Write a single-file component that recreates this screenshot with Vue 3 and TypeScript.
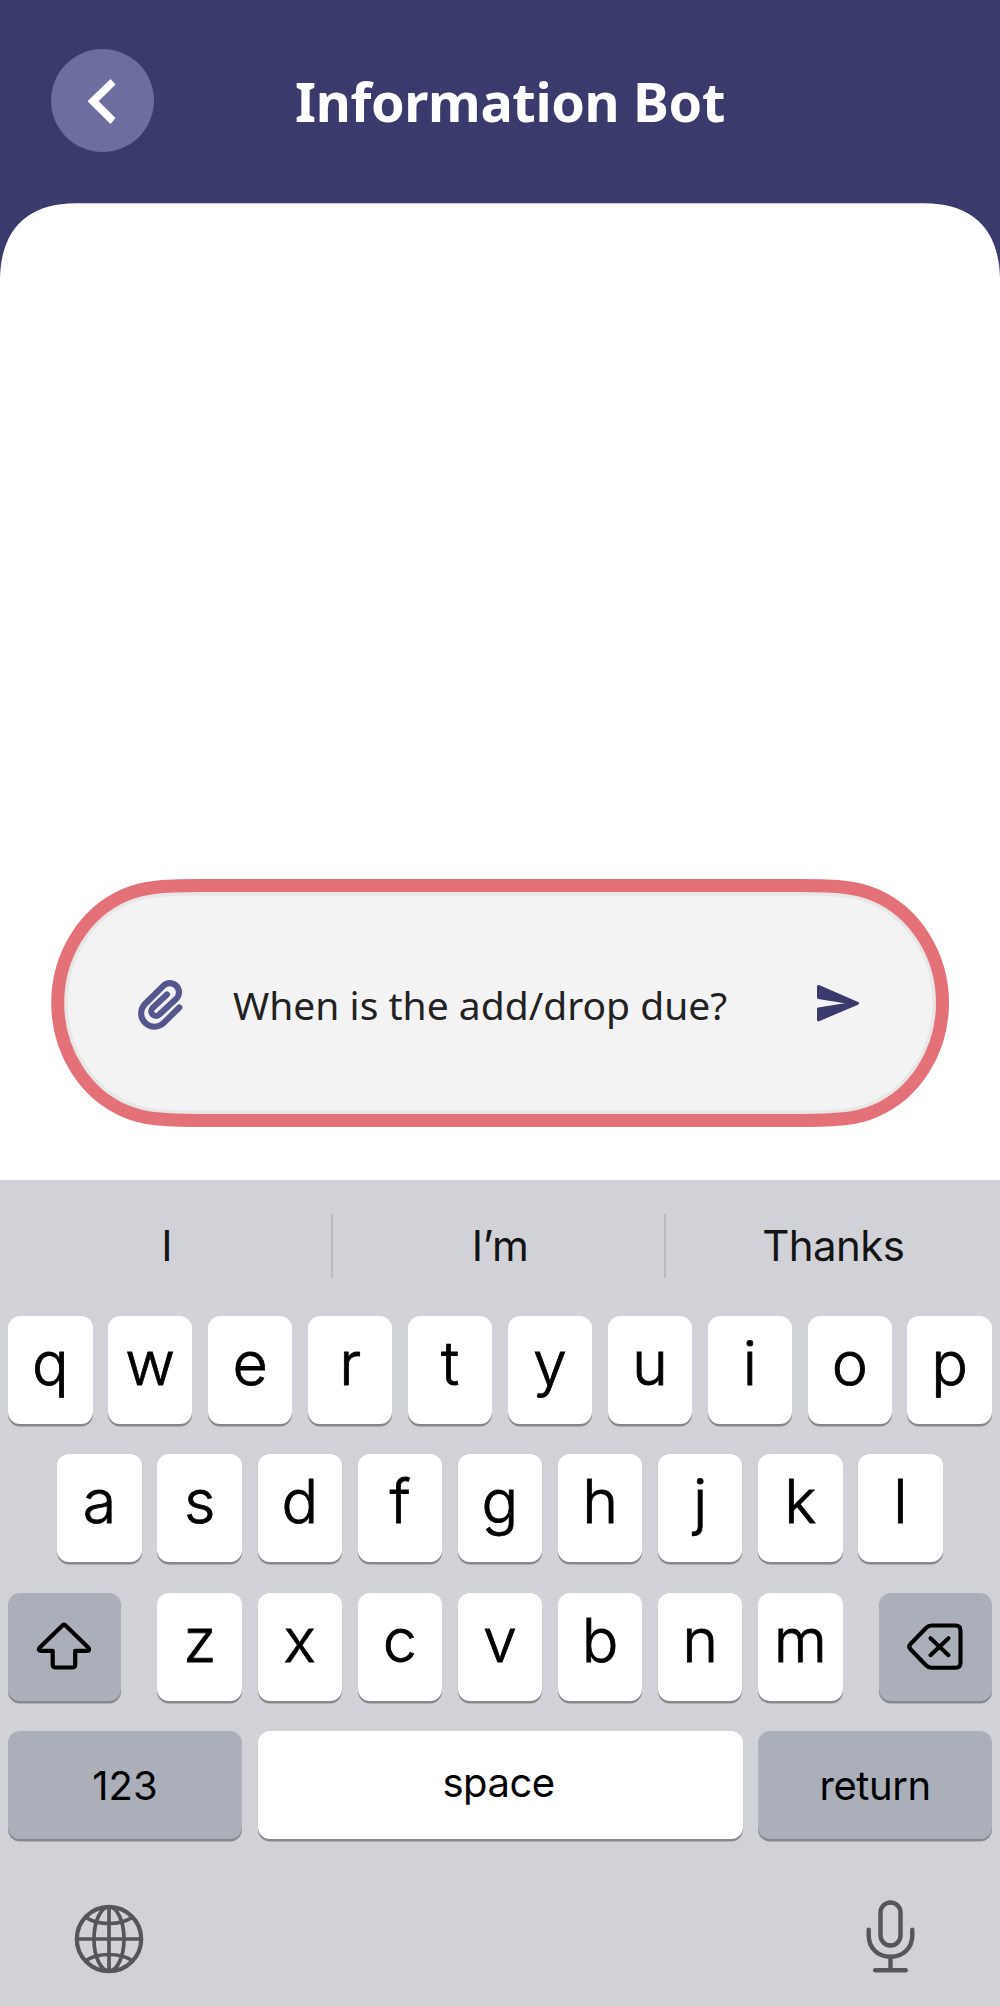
<script setup lang="ts">
interface Key {
  label: string
  kind?: 'shift' | 'delete' | 'numbers' | 'space' | 'return'
}

const title = 'Information Bot'
const message = 'When is the add/drop due?'
const suggestions: string[] = ['I', 'I’m', 'Thanks']

const pill =
  'M200 885.5 H800 C840 885.5 858 887.5 875 895 C915 912 942.5 955 942.5 1003 C942.5 1051 915 1094 875 1111 C858 1118.5 840 1120.5 800 1120.5 H200 C160 1120.5 142 1118.5 125 1111 C85 1094 57.7 1051 57.7 1003 C57.7 955 85 912 125 895 C142 887.5 160 885.5 200 885.5 Z'

const letters = (s: string): Key[] => s.split('').map((label) => ({ label }))

const rows: Key[][] = [
  letters('qwertyuiop'),
  letters('asdfghjkl'),
  [{ label: '', kind: 'shift' }, ...letters('zxcvbnm'), { label: '', kind: 'delete' }],
  [
    { label: '123', kind: 'numbers' },
    { label: 'space', kind: 'space' },
    { label: 'return', kind: 'return' },
  ],
]
</script>

<template>
  <div class="screen">
    <header class="header">
      <button class="back" aria-label="Back">
        <svg width="103" height="103" viewBox="0 0 103 103">
          <path d="M59.5 30 L64.5 35.5 L47.7 52.3 L64.5 69 L59.5 75 L36.5 52.3 Z" fill="#fff" />
        </svg>
      </button>
      <h1 class="title">{{ title }}</h1>
    </header>

    <svg class="curve" width="1000" height="75" viewBox="0 0 1000 75">
      <path d="M0 75 C1 29 25 0.3 76 0.3 H924 C975 0.3 999 29 1000 75 Z" fill="#fff" />
    </svg>

    <main class="conversation">
      <div class="composer">
        <svg class="outline" width="898" height="248" viewBox="51 879 898 248">
          <clipPath id="pill-inside"><path :d="pill" /></clipPath>
          <path :d="pill" fill="#f3f3f3" stroke="#e8e6e6" stroke-width="20" clip-path="url(#pill-inside)" />
          <path :d="pill" fill="none" stroke="#e47177" stroke-width="13" />
        </svg>
        <svg class="clip" width="50" height="56" viewBox="136 977 50 56">
          <path
            d="M179.3 1007.5 L164 1022.7 A13.3 13.3 0 0 1 145 1004 L163.3 985.8 A9.1 9.1 0 0 1 176.3 998.7 L159.3 1014.5 A4.7 4.7 0 0 1 152.5 1008 L167 994.5"
            fill="none" stroke="#56568f" stroke-width="6.1" stroke-linecap="round" stroke-linejoin="round" />
        </svg>
        <span class="message">{{ message }}</span>
        <svg class="send" width="46" height="40" viewBox="815 983 46 40">
          <path d="M818.5 986.5 L857.5 1003.3 L818.5 1019.8 V1009 L854 1003.3 L818.5 997.6 Z" fill="#3b3a6d"
            stroke="#3b3a6d" stroke-width="3" stroke-linejoin="round" />
        </svg>
      </div>
    </main>

    <section class="keyboard">
      <div class="suggestions">
        <span v-for="word in suggestions" :key="word" class="suggestion">{{ word }}</span>
      </div>
      <div class="rows">
        <div v-for="(row, r) in rows" :key="r" class="row">
          <button v-for="(key, k) in row" :key="k" class="key" :class="key.kind">
            <svg v-if="key.kind === 'shift'" width="60" height="52" viewBox="34.8 1621.5 60 52">
              <path
                d="M62.3 1625.9 Q63.8 1624.3 65.3 1625.9 L88.3 1648.3 Q90 1651.3 87 1651.3 H75 V1665 Q75 1668 72 1668 H55.5 Q52.5 1668 52.5 1665 V1651.3 H40.5 Q37.5 1651.3 39.3 1648.3 Z"
                fill="none" stroke="#000" stroke-width="4.2" stroke-linejoin="round" />
            </svg>
            <svg v-else-if="key.kind === 'delete'" width="60" height="52" viewBox="905.5 1621.3 60 52">
              <path
                d="M932 1625.8 H956 Q961 1625.8 961 1630.8 V1663 Q961 1668 956 1668 H932 Q929 1668 926.5 1665.5 L911 1649.5 Q908.5 1647 911 1644.3 L926.5 1628.3 Q929 1625.8 932 1625.8 Z M931 1638.5 L949 1655.5 M949 1638.5 L931 1655.5"
                fill="none" stroke="#000" stroke-width="4.1" stroke-linecap="round" stroke-linejoin="round" />
            </svg>
            <span v-else class="label">{{ key.label }}</span>
          </button>
        </div>
      </div>
      <div class="dock">
        <svg class="globe" width="70" height="70" viewBox="-35 -35 70 70" fill="none" stroke="#53565b" stroke-width="3.7">
          <circle r="32.2" stroke-width="4.2" />
          <path d="M0 -32 V32 M-32 0 H32" />
          <ellipse rx="15" ry="32" />
          <path d="M-23 -21.5 Q-14 -15.5 0 -15.5 T23 -21.5" />
          <path d="M-23 21.5 Q-14 15.5 0 15.5 T23 21.5" />
        </svg>
        <svg width="50" height="74" viewBox="866 1899.8 50 74" fill="none" stroke="#53565b" stroke-width="4.4"
          stroke-linecap="round">
          <rect x="880.5" y="1902.3" width="20" height="43" rx="10" />
          <path d="M868.7 1929.5 V1935 C868.7 1948 878 1956.5 890.5 1956.5 C903 1956.5 912.3 1948 912.3 1935 V1929.5" />
          <path d="M890.5 1957 V1969 M875.2 1970 H905.8" />
        </svg>
      </div>
    </section>
  </div>
</template>

<style>
body {
  margin: 0;
}
</style>

<style scoped>
.screen {
  width: 1000px;
  height: 2006px;
  display: flex;
  flex-direction: column;
  overflow: hidden;
  background: #fff;
}

.header {
  height: 203px;
  display: flex;
  box-sizing: border-box;
  padding-left: 51px;
  background: #3b3a6d;
}

.back {
  width: 103px;
  height: 103px;
  margin: 49px 0 0;
  padding: 0;
  border: 0;
  border-radius: 50%;
  background: #6e6da0;
}

.back svg,
.curve {
  display: block;
}

.title {
  margin: 0 0 0 141px;
  font: 700 54px/202px 'Noto Sans', sans-serif;
  letter-spacing: -0.36px;
  color: #fff;
  white-space: nowrap;
}

.curve {
  flex: none;
  background: #3b3a6d;
}

.conversation {
  flex: 1;
  display: flex;
  flex-direction: column;
  justify-content: flex-end;
  align-items: center;
  padding-bottom: 53px;
}

.composer {
  position: relative;
  width: 898px;
  height: 248px;
  display: flex;
  align-items: center;
}

.outline {
  position: absolute;
  inset: 0;
}

.clip,
.send,
.message {
  position: relative;
  flex: none;
}

.clip {
  margin: 4px 0 0 85px;
}

.message {
  width: 532px;
  margin: 4px 0 0 47px;
  font: 400 39px/252px 'Noto Sans', sans-serif;
  color: #222;
  white-space: nowrap;
}

.send {
  margin-left: 50px;
}

.keyboard {
  height: 826px;
  flex: none;
  background: #d1d2d7;
  font-family: Inter, sans-serif;
}

.suggestions {
  display: flex;
  height: 136px;
}

.suggestion {
  flex: 1;
  text-align: center;
  font-size: 42px;
  line-height: 132px;
  letter-spacing: -0.6px;
  color: #141414;
  background: linear-gradient(#bbbcc1, #bbbcc1) no-repeat right 0.6px top 34px / 2px 64px;
}

.suggestion:last-child {
  background: none;
}

.rows {
  display: flex;
  flex-direction: column;
  gap: 30.4px;
  padding: 0 7px;
}

.row {
  display: flex;
  justify-content: center;
  gap: 15.6px;
}

.row:first-child {
  gap: 15.45px;
}

.key {
  flex: none;
  width: 84.5px;
  height: 108px;
  display: flex;
  justify-content: center;
  align-items: flex-start;
  padding: 0;
  border: 0;
  border-radius: 12px;
  background: #fff;
  box-shadow: 0 2.4px 0 #88898d;
  font: 300 61px/94px Inter, sans-serif;
  -webkit-text-stroke: 0.8px #000;
  color: #000;
}

.key.shift,
.key.delete {
  width: 112.5px;
  align-items: center;
}

.key.shift {
  margin-right: 21px;
}

.key.delete {
  margin-left: 21px;
}

.key.shift,
.key.delete,
.key.numbers,
.key.return {
  background: #abafba;
}

.key.numbers,
.key.return {
  width: 234px;
  font: 400 40px/109px Inter, sans-serif;
  -webkit-text-stroke: 0;
}

.key.return {
  letter-spacing: -0.4px;
}

.key.space {
  width: 485px;
  font: 400 40px/103px Inter, sans-serif;
  letter-spacing: -0.5px;
  -webkit-text-stroke: 0;
}

.key.space .label {
  margin-right: 3px;
}

.dock {
  display: flex;
  justify-content: space-between;
  align-items: center;
  padding: 61px 84px 0 73.5px;
}

.globe {
  margin-top: 4px;
}
</style>
